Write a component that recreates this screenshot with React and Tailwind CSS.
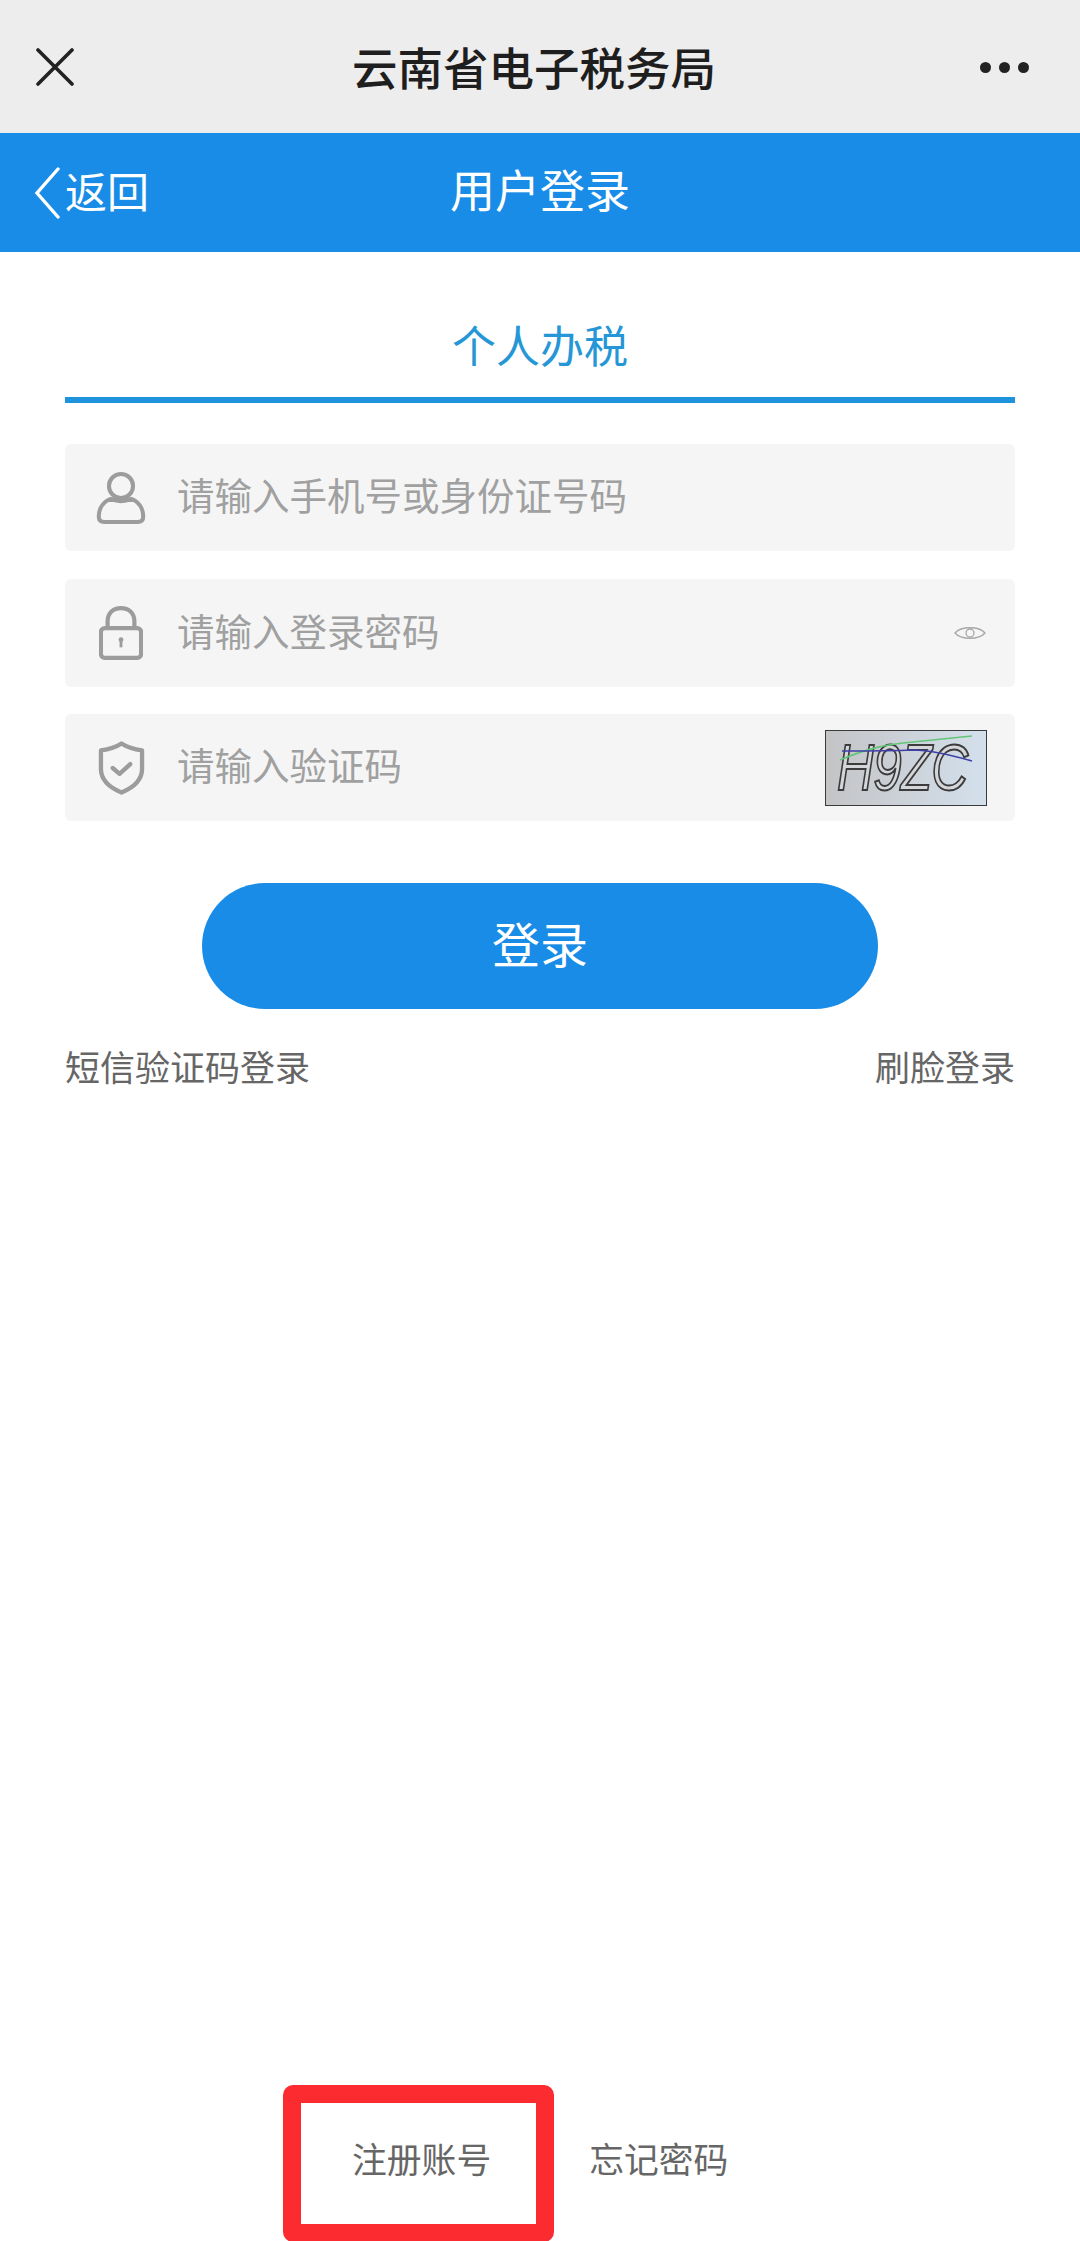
const font = "font-['Noto_Sans_CJK_SC','Liberation_Sans',sans-serif]";

function UserIcon() {
  return (
    <svg width="50" height="56" viewBox="0 0 54 58" fill="none" stroke="#9c9c9c" strokeWidth="4.4">
      <circle cx="27" cy="16" r="13" />
      <path d="M16 30 C8 33 3 40 3 49 C3 53 5 55 9 55 L45 55 C49 55 51 53 51 49 C51 40 46 33 38 30 C31 33 23 33 16 30 Z" strokeLinejoin="round" />
    </svg>
  );
}

function LockIcon() {
  return (
    <svg width="44" height="54" viewBox="0 0 46 56" fill="none" stroke="#9c9c9c" strokeWidth="4.4">
      <path d="M9 23 L9 16 C9 7 15 2 23 2 C31 2 37 7 37 16 L37 23" />
      <rect x="2" y="23" width="42" height="31" rx="4" />
      <circle cx="23" cy="35" r="2.5" fill="#9c9c9c" stroke="none" />
      <path d="M23 35 L23 43" strokeWidth="3" />
    </svg>
  );
}

function ShieldIcon() {
  return (
    <svg width="47" height="54" viewBox="0 0 48 54" fill="none" stroke="#9c9c9c" strokeWidth="4.4">
      <path d="M24 2 C30 6 37 8 45 9 L45 28 C45 39 36 47 24 52 C12 47 3 39 3 28 L3 9 C11 8 18 6 24 2 Z" strokeLinejoin="round" />
      <path d="M15 27 L22 33 L33 23" strokeLinecap="round" strokeLinejoin="round" />
    </svg>
  );
}

function EyeIcon() {
  return (
    <svg width="32" height="16" viewBox="0 0 32 16" fill="none" stroke="#a8a8a8" strokeWidth="1.3">
      <path d="M1 8 C7 1 25 1 31 8 C25 15 7 15 1 8 Z" />
      <circle cx="16" cy="8" r="4" />
    </svg>
  );
}

function Captcha() {
  return (
    <div className="relative ml-auto flex h-[76px] w-[162px] items-center overflow-hidden border border-[#3a3a3a] bg-gradient-to-r from-[#c4c4c6] to-[#d3e0ec] pl-[11px]">
      <span className="origin-left scale-x-[0.8] font-['Liberation_Sans',sans-serif] text-[64px] leading-none tracking-[-1px] text-[#d4d6da] italic [-webkit-text-stroke:2px_#3c3c3c]">
        H9ZC
      </span>
      <svg className="absolute inset-0" width="160" height="74" viewBox="0 0 160 74" fill="none">
        <path d="M14 29 C40 18 60 13 87 11 C110 9 125 7 146 5" stroke="#63c578" strokeWidth="1.6" />
        <path d="M16 20 C40 20 65 20 87 19 C105 19 125 24 146 30" stroke="#3f3fa8" strokeWidth="1.6" />
      </svg>
    </div>
  );
}

function Field({ icon, placeholder, children, className = "h-[107px]" }) {
  return (
    <div className={`flex items-center rounded-[6px] bg-[#f5f5f5] pr-[24px] ${className}`}>
      <div className="flex w-[112px] justify-center">{icon}</div>
      <span className="pb-[7px] text-[37.5px] leading-none text-[#a0a0a0]">{placeholder}</span>
      {children}
    </div>
  );
}

export default function App() {
  return (
    <div className={`relative flex h-[2241px] w-[1080px] flex-col overflow-hidden bg-white ${font}`}>
      {/* wechat title bar */}
      <div className="relative flex h-[133px] items-center justify-between bg-[#ededed] pr-[51px] pl-[36px]">
        <svg width="38" height="38" viewBox="0 0 38 38" fill="none" stroke="#222" strokeWidth="3.6" strokeLinecap="round">
          <path d="M2 2 L36 36 M36 2 L2 36" />
        </svg>
        <h1 className="absolute left-[352px] text-[45.5px] leading-none font-medium text-[#1e1e1e]">云南省电子税务局</h1>
        <div className="flex gap-[8px] pt-[2px]">
          <span className="h-[11px] w-[11px] rounded-full bg-[#222]" />
          <span className="h-[11px] w-[11px] rounded-full bg-[#222]" />
          <span className="h-[11px] w-[11px] rounded-full bg-[#222]" />
        </div>
      </div>

      {/* blue header */}
      <div className="relative flex h-[119px] items-center justify-center bg-[#188ce6] text-white">
        <div className="absolute top-0 left-[34px] flex h-full items-center gap-[5px]">
          <svg width="26" height="52" viewBox="0 0 26 52" fill="none" stroke="#fff" strokeWidth="3.4" strokeLinecap="round">
            <path d="M24 2 L3 26 L24 50" />
          </svg>
          <span className="pb-[6px] text-[42px] leading-none">返回</span>
        </div>
        <span className="pb-[9px] text-[45px] leading-none">用户登录</span>
      </div>

      <div className="flex flex-1 flex-col px-[65px]">
        <div className="flex h-[151px] items-center justify-center border-b-[6px] border-[#1f93dc] pt-[38px] text-[44px] leading-none text-[#2596d6]">
          个人办税
        </div>

        <div className="mt-[41px] flex flex-col">
          <Field icon={<UserIcon />} placeholder="请输入手机号或身份证号码" />
          <Field className="mt-[28px] h-[108px]" icon={<LockIcon />} placeholder="请输入登录密码">
            <div className="ml-auto pr-[5px]">
              <EyeIcon />
            </div>
          </Field>
          <Field className="mt-[27px] h-[107px]" icon={<ShieldIcon />} placeholder="请输入验证码">
            <div className="ml-auto pr-[4px]">
              <Captcha />
            </div>
          </Field>
        </div>

        <button className="mx-auto mt-[62px] h-[126px] w-[676px] rounded-full bg-[#188ce6] pb-[9px] text-[48px] leading-none text-white">
          登录
        </button>

        <div className="mt-[33px] flex justify-between text-[35px] leading-[48px] text-[#666]">
          <span>短信验证码登录</span>
          <span>刷脸登录</span>
        </div>

        <div className="mt-auto mb-[59px] ml-[287px] flex gap-[98px] text-[34.8px] leading-[48px] text-[#666]">
          <span>注册账号</span>
          <span>忘记密码</span>
        </div>
      </div>

      {/* red annotation round the register link */}
      <div className="absolute top-[2085px] left-[283px] h-[157px] w-[271px] rounded-[10px] border-[18px] border-[#fb2b2f]" />
    </div>
  );
}
